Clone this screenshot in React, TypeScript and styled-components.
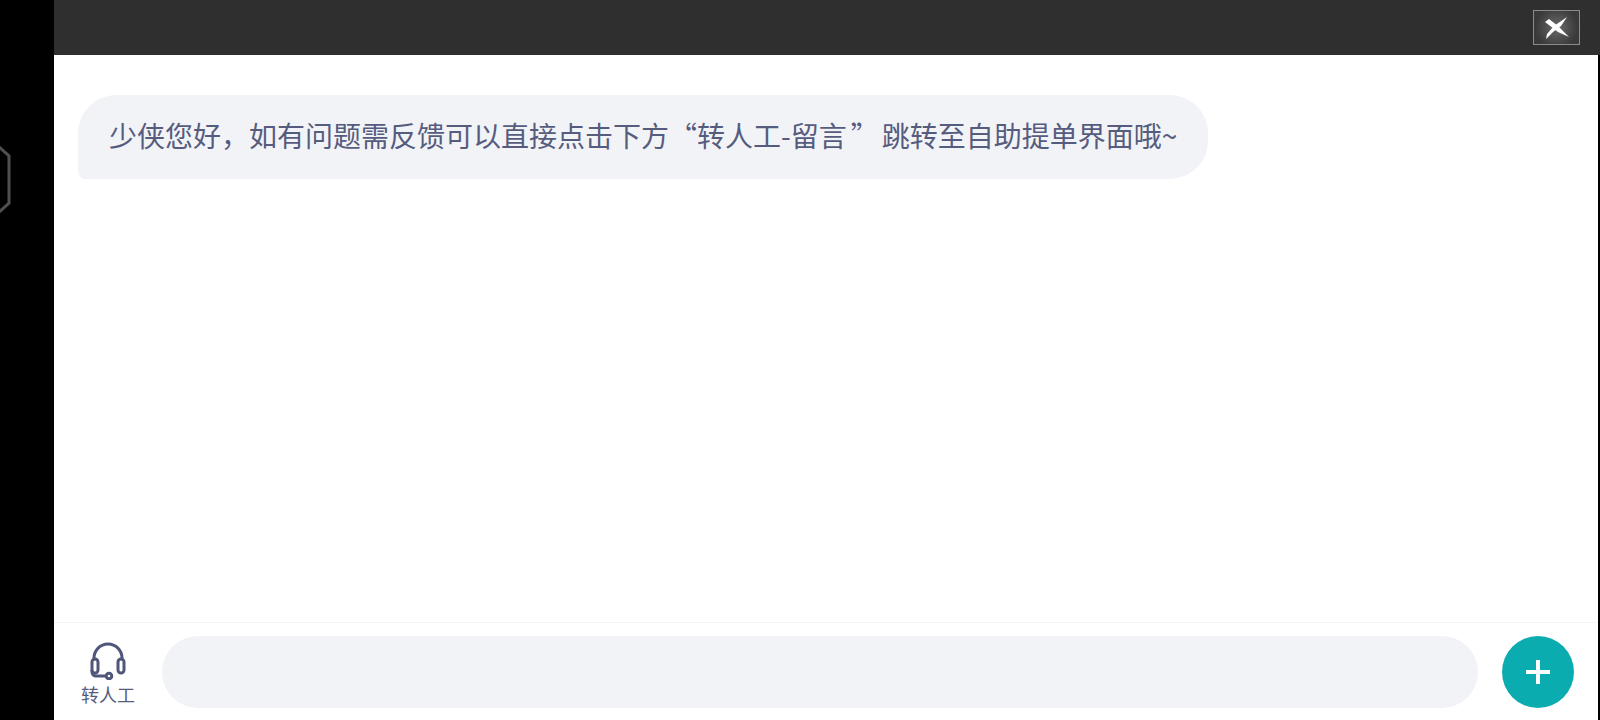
import React from 'react'
import styled, { createGlobalStyle } from 'styled-components'

const GlobalStyle = createGlobalStyle`
  html, body {
    margin: 0;
    padding: 0;
    background: #000;
    overflow: hidden;
  }
  * {
    box-sizing: border-box;
  }
`

const HexHandle = () => (
  <svg width="12" height="70" viewBox="0 0 12 70" fill="none">
    <path d="M-2 1 L9 11 V58 L-2 68" stroke="#505050" strokeWidth="3" />
  </svg>
)

const CloseMark = () => (
  <svg width="28" height="24" viewBox="0 0 28 24">
    <path d="M2 6 L6 3 L15 10 L26 21 L15 16 Z" fill="#fff" />
    <path d="M24 1 L18 10 L10 16 L3 23 L4 18 L11 10 Z" fill="#fff" />
  </svg>
)

const HeadsetIcon = () => (
  <svg width="40" height="38" viewBox="0 1 40 38" fill="none" stroke="#50567a" strokeWidth="3">
    <path d="M6 18 V17 A14 14 0 0 1 34 17 V18" />
    <path d="M4 21 A3 3 0 0 1 10 21 V29 A3 3 0 0 1 4 29 Z" />
    <rect x="30" y="18" width="6" height="14" rx="3" />
    <path d="M4 29 V31 A4 4 0 0 0 8 35 H18" />
    <circle cx="21" cy="35" r="2.8" />
  </svg>
)

const App = () => {
  return (
    <Page>
      <GlobalStyle />
      <Rail>
        <HexHandle />
      </Rail>
      <Main>
        <Header>
          <CloseButton>
            <CloseMark />
          </CloseButton>
        </Header>
        <Body>
          <Chat>
            <Bubble>
              少侠您好，如有问题需反馈可以直接点击下方“转人工-留言<CloseQuote>”</CloseQuote>跳转至自助提单界面哦~
            </Bubble>
          </Chat>
          <Footer>
            <Agent>
              <HeadsetIcon />
              <AgentLabel>转人工</AgentLabel>
            </Agent>
            <Input />
            <AddButton>
              <PlusMark />
            </AddButton>
          </Footer>
        </Body>
      </Main>
    </Page>
  )
}

export default App

const Page = styled.div`
  display: flex;
  width: 1600px;
  height: 720px;
  background: #000;
  font-family: 'Noto Sans CJK SC', 'Liberation Sans', sans-serif;
`
const Rail = styled.div`
  flex: 0 0 54px;
  padding-top: 145px;
`
const Main = styled.div`
  flex: 1;
  display: flex;
  flex-direction: column;
`
const Header = styled.div`
  flex: 0 0 55px;
  display: flex;
  justify-content: flex-end;
  padding: 10px 20px 0 0;
  background: #2f2f2f;
`
const CloseButton = styled.div`
  display: flex;
  align-items: center;
  justify-content: center;
  width: 47px;
  height: 35px;
  border: 1px solid #8b8b8b;
  background: radial-gradient(circle, #6a6a6a 0%, #3a3a3a 75%);
`
const Body = styled.div`
  flex: 1;
  display: flex;
  flex-direction: column;
  margin-right: 2px;
  background: #fff;
`
const Chat = styled.div`
  flex: 1;
  padding: 40px 0 0 24px;
`
const Bubble = styled.div`
  display: inline-block;
  height: 84px;
  padding: 0 31px;
  border-radius: 38px 38px 38px 8px;
  background: #f2f3f7;
  color: #565c7e;
  font-size: 28px;
  line-height: 81px;
  white-space: nowrap;
`
const CloseQuote = styled.span`
  margin: 0 3px 0 4px;
`
const Footer = styled.div`
  flex: 0 0 98px;
  display: flex;
  align-items: flex-start;
  padding: 13px 24px 0 0;
  border-top: 1px solid #f5f5f7;
`
const Agent = styled.div`
  flex: 0 0 108px;
  display: flex;
  flex-direction: column;
  align-items: center;
  padding-top: 6px;
`
const AgentLabel = styled.div`
  margin-top: 2px;
  color: #565c7e;
  font-size: 18px;
  line-height: 24px;
`
const Input = styled.div`
  flex: 1;
  height: 72px;
  border-radius: 36px;
  background: #f2f3f7;
`
const AddButton = styled.div`
  flex: 0 0 72px;
  position: relative;
  height: 72px;
  margin-left: 24px;
  border-radius: 50%;
  background: #0bacb0;
`
const PlusMark = styled.div`
  position: absolute;
  left: 24px;
  top: 24px;
  width: 24px;
  height: 24px;
  background:
    linear-gradient(#fff, #fff) center / 24px 4px no-repeat,
    linear-gradient(#fff, #fff) center / 4px 24px no-repeat;
  border-radius: 2px;
`
